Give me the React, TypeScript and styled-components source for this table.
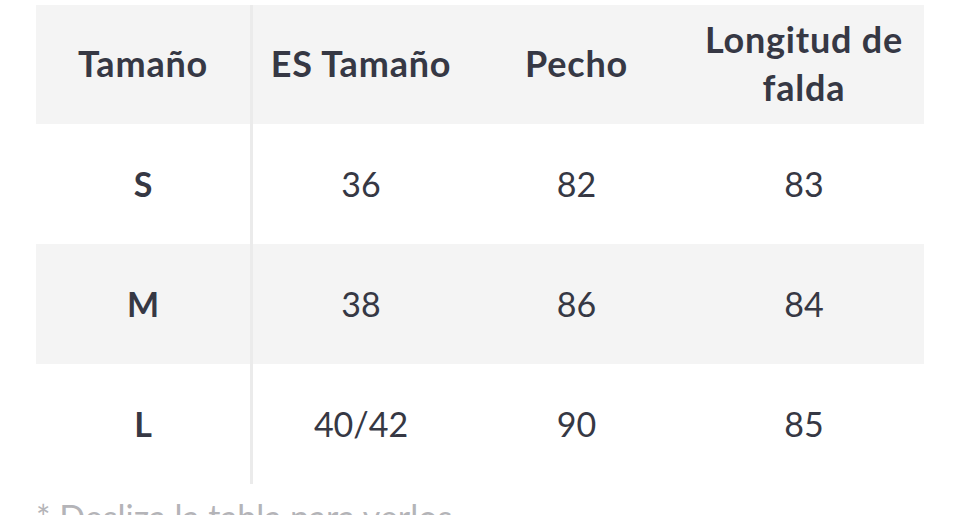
import React from "react";
import styled, { createGlobalStyle } from "styled-components";

const Global = createGlobalStyle`
  html, body { margin: 0; padding: 0; background: #ffffff; overflow: hidden; }
  body { font-family: Lato, "Noto Sans", sans-serif; }
`;

const Page = styled.div`
  padding: 5px 36px 0 36px;
  width: 888px;
`;

const Table = styled.div`
  display: grid;
  grid-template-columns: 217px 216px 215px 240px;
  grid-template-rows: 119px;
  grid-auto-rows: 120px;
`;

const Cell = styled.div<{ $shade?: boolean; $divider?: boolean; $head?: boolean; $bold?: boolean }>`
  display: flex;
  align-items: center;
  justify-content: center;
  text-align: center;
  background: ${(p) => (p.$shade ? "#f4f4f4" : "#ffffff")};
  border-right: ${(p) => (p.$divider ? "3px solid #ebebeb" : "none")};
  color: #363844;
  font-size: ${(p) => (p.$head ? "36px" : "34px")};
  letter-spacing: ${(p) => (p.$head ? "0.8px" : "0")};
  font-weight: ${(p) => (p.$bold ? 700 : 400)};
  line-height: 48px;
  box-sizing: border-box;
  padding: ${(p) => (p.$head ? "0 10px 3px" : "0 10px")};
`;

const Note = styled.div`
  margin-top: 12px;
  font-size: 34px;
  color: #b4b4b8;
  white-space: nowrap;
`;

const headers = ["Tamaño", "ES Tamaño", "Pecho", "Longitud de falda"];
const rows = [
  ["S", "36", "82", "83"],
  ["M", "38", "86", "84"],
  ["L", "40/42", "90", "85"],
];

export default function App() {
  return (
    <>
      <Global />
      <Page>
        <Table>
          {headers.map((h, i) => (
            <Cell key={h} $head $bold $shade $divider={i === 0}>
              {h}
            </Cell>
          ))}
          {rows.map((r, ri) =>
            r.map((v, ci) => (
              <Cell key={`${ri}-${ci}`} $shade={ri === 1} $divider={ci === 0} $bold={ci === 0}>
                {v}
              </Cell>
            ))
          )}
        </Table>
        <Note>* Desliza la tabla para verlos</Note>
      </Page>
    </>
  );
}
